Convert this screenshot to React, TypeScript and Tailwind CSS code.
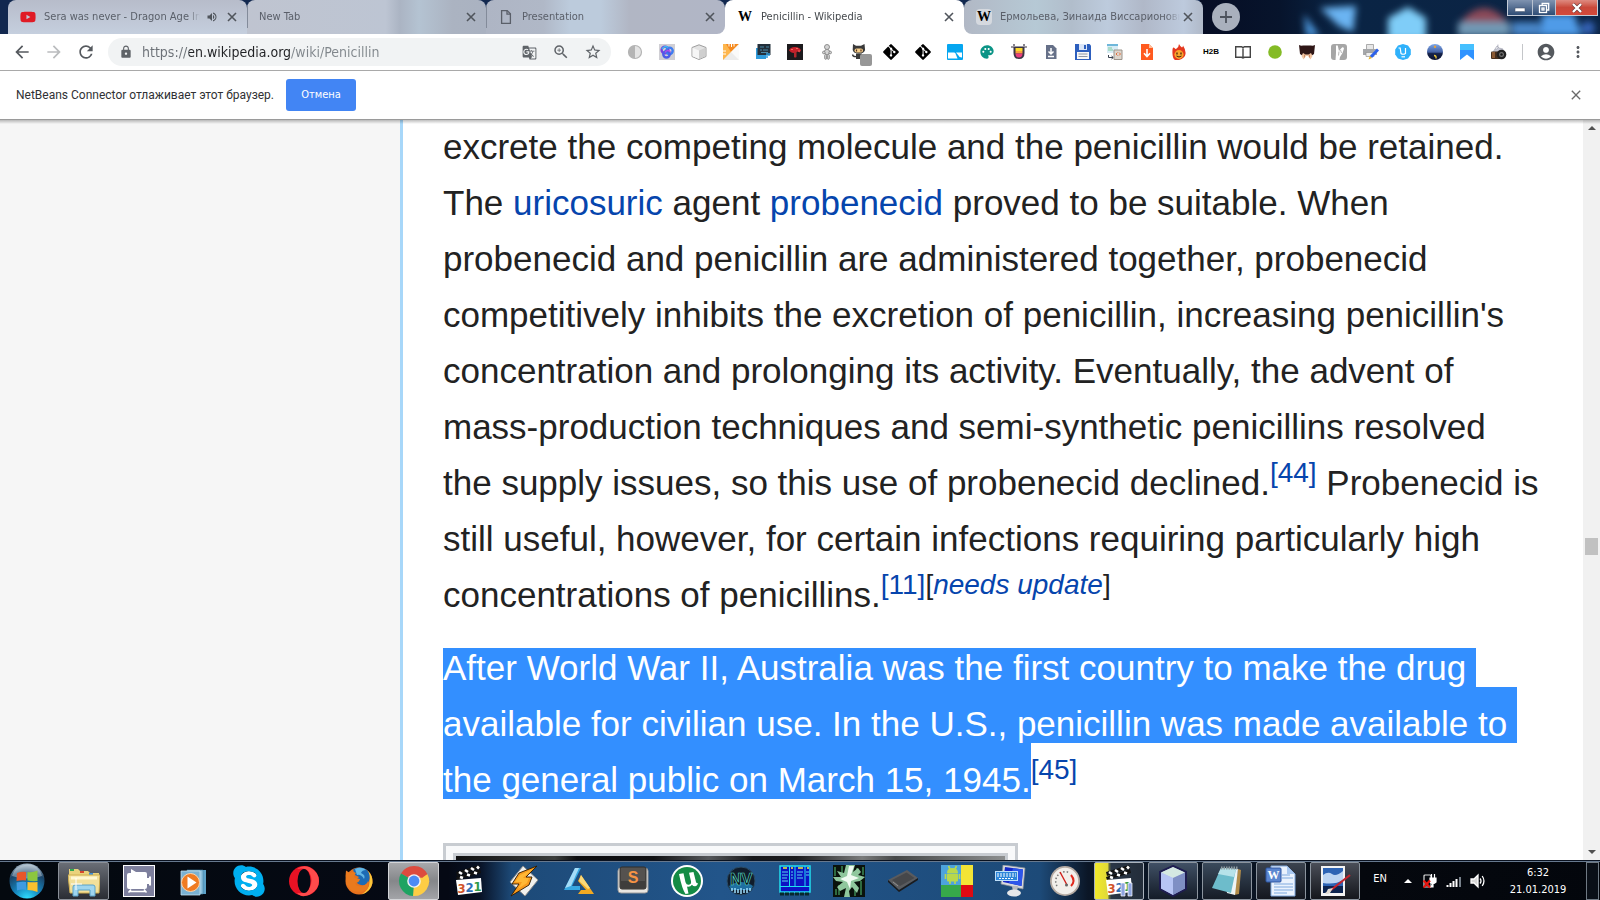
import type { ReactNode } from "react";
import { FaGitAlt, FaSkype, FaYoutube } from "react-icons/fa";
import {
  MdAccountCircle,
  MdArrowBack,
  MdArrowForward,
  MdClose,
  MdGTranslate,
  MdLock,
  MdMoreVert,
  MdPalette,
  MdRefresh,
  MdStarBorder,
  MdVolumeUp,
  MdZoomIn,
} from "react-icons/md";

const UI = "font-['DejaVu_Sans_Condensed','DejaVu_Sans',sans-serif]";

function I16({ children }: { children: ReactNode }) {
  return (
    <svg viewBox="0 0 16 16" className="size-4" aria-hidden="true">
      {children}
    </svg>
  );
}

function I32({ children }: { children: ReactNode }) {
  return (
    <svg viewBox="0 0 32 32" className="size-8" aria-hidden="true">
      {children}
    </svg>
  );
}

/* ---------- tab strip ---------- */

function WikiIcon({ boxed = false }: { boxed?: boolean }) {
  return (
    <span
      className={`flex size-4 shrink-0 items-center justify-center font-['Liberation_Serif',serif] text-[14px] leading-4 font-bold text-black ${boxed ? "rounded-sm bg-[#d5d9df]" : ""}`}
    >
      W
    </span>
  );
}

type TabInfo = {
  title: string;
  icon?: ReactNode;
  audio?: boolean;
  active?: boolean;
  wrap: string;
  look: string;
};

const tabs: TabInfo[] = [
  {
    title: "Sera was never - Dragon Age Inquisition",
    audio: true,
    icon: <FaYoutube className="size-4 shrink-0 text-[#e01b25]" />,
    wrap: "",
    look: "rounded-t-lg bg-linear-to-b from-[#b7bcca] to-[#c5cfde]",
  },
  {
    title: "New Tab",
    wrap: "",
    look: "rounded-t-lg bg-[linear-gradient(90deg,#bfc4d0_0%,#bdc5d3_58%,#abb4c3_64%,#b4c3d2_72%,#abb3c1_86%,#aab2c1_100%)]",
  },
  {
    title: "Presentation",
    icon: (
      <svg viewBox="0 0 16 16" className="size-4 shrink-0" fill="none" stroke="#5a5f69" strokeWidth="1.3" aria-hidden="true">
        <path d="M3.6 1.6h5.6l3.2 3.2v9.6H3.6z" />
        <path d="M9 1.8v3.3h3.3" />
      </svg>
    ),
    wrap: "bg-[linear-gradient(to_top,white_10px,#12284f_10px)]",
    look: "rounded-t-lg rounded-br-lg bg-[linear-gradient(90deg,#aeb5c4_0%,#b0b8c7_24%,#bccbdc_35%,#bccbdc_48%,#b1b6c4_60%,#b1b6c6_100%)]",
  },
  {
    title: "Penicillin - Wikipedia",
    icon: <WikiIcon />,
    active: true,
    wrap: "",
    look: "rounded-t-lg bg-white",
  },
  {
    title: "Ермольева, Зинаида Виссарионовна — Википедия",
    icon: <WikiIcon boxed />,
    wrap: "bg-[linear-gradient(90deg,white_10px,transparent_10px)] bg-[position:0_24px] bg-no-repeat",
    look: "rounded-t-lg rounded-bl-lg bg-[linear-gradient(90deg,#b1b8c5_0%,#b6c9d5_30%,#b1bdcb_45%,#bdcbdd_60%,#b0b8c8_75%,#bdcadd_92%,#b0b9c8_100%)]",
  },
];

function Tab({ tab, divider }: { tab: TabInfo; divider: boolean }) {
  return (
    <div className={`min-w-0 flex-1 basis-0 ${tab.wrap}`}>
      <div className={`relative flex h-[34px] items-center pr-[7px] pl-3 ${tab.look}`}>
        {divider && <span className="absolute top-[6px] left-0 h-[22px] w-px bg-[#838b9a]" />}
        <button
          role="tab"
          aria-selected={!!tab.active}
          className={`flex min-w-0 flex-1 items-center gap-2 text-left text-[11px] leading-4 ${tab.active ? "text-[#45494d]" : "text-[#5a5f69]"}`}
        >
          {tab.icon}
          <span className="min-w-0 flex-1 overflow-hidden whitespace-nowrap mask-r-from-92%">{tab.title}</span>
        </button>
        {tab.audio && <MdVolumeUp className="mx-[6px] size-3 shrink-0 text-[#50555c]" />}
        <button aria-label={`Close ${tab.title}`} className="flex size-4 shrink-0 items-center justify-center">
          <svg viewBox="0 0 10 10" className="size-[10px]" stroke="#50555c" strokeWidth="1.6" aria-hidden="true">
            <path d="M1 1l8 8M9 1l-8 8" />
          </svg>
        </button>
      </div>
    </div>
  );
}

function Wallpaper() {
  return (
    <svg viewBox="0 0 400 34" className="absolute top-0 right-0 h-full w-[400px]" aria-hidden="true">
      <defs>
        <filter id="soft" x="-20%" y="-40%" width="140%" height="180%">
          <feGaussianBlur stdDeviation="3.5" />
        </filter>
        <linearGradient id="night-sky">
          <stop offset="0" stopColor="#060d24" />
          <stop offset=".2" stopColor="#07142c" />
          <stop offset=".35" stopColor="#0a2444" />
          <stop offset="1" stopColor="#0b2445" />
        </linearGradient>
      </defs>
      <rect width="400" height="34" fill="url(#night-sky)" />
      <g filter="url(#soft)">
        <path d="M104 14l16 22h-14z" fill="#4b96dc" />
        <path d="M120 8l36-2-3 26-14-6z" fill="#6ab4f2" />
        <path d="M188 18l20-11 18 11v22h-38z" fill="#7fcdf8" />
        <path d="M262 20q22-24 44 0v6h-44z" fill="#8c4958" />
        <path d="M258 22h52v14h-52z" fill="#7199b5" />
        <path d="M312 22h28v14h-28z" fill="#4a86c8" />
        <path d="M342 14h32l8 22h-42z" fill="#4f9be8" />
        <circle cx="388" cy="28" r="7" fill="#3463b8" />
      </g>
    </svg>
  );
}

function WindowButtons() {
  return (
    <div className="relative mr-[2px] ml-auto flex h-4 shrink-0 self-start border border-t-0 border-[#c4ccd8]">
      <button aria-label="Minimize" className="flex w-[25px] items-center justify-center border-r border-[#b8c2d0] bg-linear-to-b from-[#7f93b0] to-[#2f4d75]">
        <svg viewBox="0 0 12 10" className="h-[10px] w-3" aria-hidden="true">
          <rect x="1" y="5" width="10" height="3.6" fill="#fff" stroke="#4a5870" strokeWidth=".6" />
        </svg>
      </button>
      <button aria-label="Restore" className="flex w-[23px] items-center justify-center border-r border-[#b8c2d0] bg-linear-to-b from-[#7f93b0] to-[#2f4d75]">
        <svg viewBox="0 0 12 12" className="size-3" fill="none" stroke="#fff" strokeWidth="1.3" aria-hidden="true">
          <path d="M4.2 3V1.5h6.500v6.500H9" />
          <rect x="1.5" y="3.5" width="7" height="7" />
          <rect x="4" y="6" width="2" height="2" />
        </svg>
      </button>
      <button aria-label="Close window" className="flex w-[41px] items-center justify-center bg-linear-to-b from-[#de8a80] via-[#c9483a] to-[#d4493a]">
        <svg viewBox="0 0 12 10" className="h-[10px] w-3" aria-hidden="true">
          <path d="M2 1l8 8M10 1L2 9" stroke="#6b3a3a" strokeWidth="3.6" />
          <path d="M2 1l8 8M10 1L2 9" stroke="#fff" strokeWidth="2.4" />
        </svg>
      </button>
    </div>
  );
}

/* ---------- toolbar extensions ---------- */

const extensions: { name: string; icon: ReactNode }[] = [
  {
    name: "Contrast",
    icon: (
      <I16>
        <circle cx="8" cy="8" r="6.5" fill="#e4e4e4" stroke="#b4b4b4" strokeWidth="1.2" />
        <path d="M8 1.5a6.5 6.5 0 0 0 0 13z" fill="#b4b4b4" />
      </I16>
    ),
  },
  {
    name: "Swirl",
    icon: (
      <I16>
        <rect width="16" height="16" fill="#d0cfd4" />
        <g fill="none" strokeWidth="2.4">
          <circle cx="6" cy="6" r="3.4" stroke="#7a3fe0" />
          <circle cx="10.5" cy="6.8" r="3.2" stroke="#3f7df0" />
          <circle cx="7.5" cy="10.3" r="3.2" stroke="#4a5ce8" />
          <path d="M3 5q2.500-4 6-1.500" stroke="#37c4ee" strokeWidth="1.5" />
          <path d="M6 8.500q2-3.500 5.500-.5" stroke="#b44be8" strokeWidth="1.5" />
        </g>
      </I16>
    ),
  },
  {
    name: "Cube",
    icon: (
      <I16>
        <path d="M8 .8l7 2.700v9L8 15.500l-7-3v-9z" fill="#e3e3e3" stroke="#9d9d9d" />
        <path d="M1.5 3.800L8 6.500v8.500l-6.500-2.800z" fill="#f6f6f6" />
        <path d="M8 6.500l6.500-2.700v8.400L8 15z" fill="#cfcfcf" />
      </I16>
    ),
  },
  {
    name: "Ruler",
    icon: (
      <I16>
        <rect width="16" height="16" fill="#ececec" />
        <path d="M0 0h16L0 16z" fill="#fdb64e" />
        <path d="M3 0h13L8 8z" fill="#f58a1f" />
        <path d="M6 0v2.500M8.500 0v3M11 0v2.500M0 7h3M0 10h3" stroke="#fff" />
        <path d="M16 0v16L8 8z" fill="#fafafa" />
      </I16>
    ),
  },
  {
    name: "Screens",
    icon: (
      <I16>
        <rect x="1" y="4" width="10" height="11" fill="#2f9bdb" />
        <rect x="2.500" y="0" width="13" height="11" fill="#23303b" />
        <path d="M5 3h4M11 3h3M5 6h2M8 6h5M6 8.500h7" stroke="#4a88a8" />
        <path d="M12 9v5M14 9v3" stroke="#2f9bdb" strokeWidth="1.5" />
      </I16>
    ),
  },
  {
    name: "Mushroom",
    icon: (
      <I16>
        <rect width="16" height="16" fill="#1c1a1d" />
        <path d="M2 6.500q1-3.500 6-3.500t6 3.500l-1.500 2-1.500-1-2.500 1q-4 1.500-6.500-2z" fill="#c8202b" />
        <path d="M7 7.500h2.500V13q-1.200 1-2.500 0z" fill="#b0262c" />
        <path d="M4 5.500h2M9 4.500h2M11 7h2" stroke="#ef6a5c" />
      </I16>
    ),
  },
  {
    name: "Figure",
    icon: (
      <I16>
        <g fill="#d4d4d4" stroke="#858585" strokeWidth=".9">
          <circle cx="8" cy="3" r="2.5" />
          <rect x="5.5" y="5.5" width="5" height="5" rx="2" />
          <circle cx="4.800" cy="8.500" r="1.3" />
          <circle cx="11.200" cy="8.500" r="1.3" />
          <rect x="5.700" y="10.300" width="2" height="5" rx="1" />
          <rect x="8.300" y="10.300" width="2" height="5" rx="1" />
        </g>
      </I16>
    ),
  },
  {
    name: "Octocat",
    icon: (
      <span className="relative block size-4">
        <svg viewBox="0 0 16 16" className="size-4" aria-hidden="true">
          <path d="M2 0l3 1.800h5L13.500 0l.6 6q-1 3.500-6.300 3.500T1.700 6z" fill="#3a3a3a" />
          <rect x="3.5" y="4.5" width="8.5" height="4" rx="2" fill="#f7cf8a" />
          <path d="M5.500 5.500v2M10 5.500v2" stroke="#503020" strokeWidth="1.2" />
          <path d="M5 9.500h6V15H5z" fill="#3a3a3a" />
          <path d="M5.500 12.500Q2 13 1.500 10.500" fill="none" stroke="#3a3a3a" strokeWidth="1.3" />
        </svg>
        <span className="absolute top-[10px] left-[9px] size-3 rounded-xs bg-[#979797]" />
      </span>
    ),
  },
  { name: "Git", icon: <FaGitAlt className="size-[18px] text-black" /> },
  { name: "Git history", icon: <FaGitAlt className="size-[18px] text-black" /> },
  {
    name: "Panels",
    icon: (
      <I16>
        <rect width="16" height="16" rx="1" fill="#05a6f0" />
        <path d="M1 8.500h6q1 0 1.500 1l2 5H1z" fill="#fff" />
        <path d="M9 8.500h6v5q-3 0-3.500-2z" fill="#fff" />
      </I16>
    ),
  },
  { name: "Palette", icon: <MdPalette className="size-4 text-[#0b9486]" /> },
  {
    name: "Cup",
    icon: (
      <I16>
        <path d="M2.500 3h11v6q0 6-5.500 6T2.500 9z" fill="#3b3544" />
        <path d="M4.500 4h7v3h-7z" fill="#fbd92e" />
        <path d="M4.500 7h7v2.500h-7z" fill="#f9a03c" />
        <path d="M4.500 9.500h7q0 4-3.500 4t-3.500-4z" fill="#ea3d7b" />
        <path d="M0 3h16M3 0v2M13 0v2" stroke="#3b3544" strokeWidth="1.2" />
      </I16>
    ),
  },
  {
    name: "Save page",
    icon: (
      <I16>
        <path d="M3 1h7l3.500 3.500V15H3z" fill="#667088" />
        <path d="M8 4v6M5.500 7.500L8 10l2.500-2.500M5 12.500h6" fill="none" stroke="#fff" strokeWidth="1.5" />
      </I16>
    ),
  },
  {
    name: "Disk",
    icon: (
      <I16>
        <path d="M0 0h14.500L16 1.500V16H0z" fill="#2d5fbe" />
        <path d="M4 0h8v6H4z" fill="#dbe6f8" />
        <path d="M9 1h2v4H9z" fill="#2d5fbe" />
        <path d="M2 8h12v7H2z" fill="#f7f7f7" />
        <path d="M3.500 10h9M3.500 12.500h9" stroke="#8e96a4" />
      </I16>
    ),
  },
  {
    name: "Transfer",
    icon: (
      <I16>
        <rect width="11" height="9" fill="#d8ecf5" />
        <rect width="11" height="2" fill="#6fb7da" />
        <path d="M1 4h4M1 6h5" stroke="#7ecb9f" />
        <path d="M1.500 11v2.500H6M4.500 12l1.800 1.500L4.500 15" fill="none" stroke="#3a4250" />
        <path d="M7 6h8v9.500H7z" fill="#ddd6cd" stroke="#9b948c" />
        <path d="M9 10l1.500-1.500M9 10l1.500 1.500M13.500 10L12 8.500M13.500 10L12 11.500" stroke="#e06f3f" />
      </I16>
    ),
  },
  {
    name: "Download",
    icon: (
      <I16>
        <path d="M2 0h8l4 4v12H2z" fill="#ff5a1f" />
        <path d="M10 0l4 4h-4z" fill="#ffc09c" />
        <path d="M8 5v7M5 9.300L8 12.500l3-3.200" fill="none" stroke="#fff" strokeWidth="1.6" />
      </I16>
    ),
  },
  {
    name: "Flame",
    icon: (
      <I16>
        <path d="M8 0q1 2 3 3.500 1-.5 1-2Q15 6 14.500 10T8 16 1.500 10 3.500 4q.5 1 1.500 1Q8 3 8 0z" fill="#e5391f" />
        <ellipse cx="8" cy="10.500" rx="4.6" ry="4.4" fill="#f9a52c" />
        <path d="M6 8.500v2M10 8.500v2" stroke="#47230d" strokeWidth="1.3" />
        <path d="M5.500 12q2.500 2 5 0" fill="none" stroke="#47230d" />
      </I16>
    ),
  },
  {
    name: "H2B",
    icon: <span className="font-['Liberation_Sans',sans-serif] text-[8px] leading-4 font-bold text-black">H2B</span>,
  },
  {
    name: "Reader",
    icon: (
      <I16>
        <path d="M.7 2.700h5.800L8 3.700l1.500-1h5.800v10.600H9.500L8 14l-1.500-.7H.7zM8 3.700V14" fill="#fff" stroke="#444" strokeWidth="1.4" />
      </I16>
    ),
  },
  {
    name: "Status",
    icon: (
      <I16>
        <circle cx="8" cy="8" r="6.8" fill="#84bb25" />
      </I16>
    ),
  },
  {
    name: "Face",
    icon: (
      <I16>
        <path d="M0 1q2 1 4 .5h8q2 .5 4-.5l-1 9-3 2H4l-3-2z" fill="#2f1616" />
        <path d="M4 9l-1.500 3 2 3.500L7 12l2 0 2.500 3.500 2-3.500L12 9l-2.500 1.500h-3z" fill="#f2c6a4" />
        <path d="M5.500 10.500v3M10.500 10.500v3" stroke="#b9704c" strokeWidth=".7" />
      </I16>
    ),
  },
  {
    name: "Gesture",
    icon: (
      <I16>
        <rect width="16" height="16" rx="3" fill="#a6a6a6" />
        <path d="M4.500 16L5 9 5 1.500h1.700L8 7l2.500-3 1.500-1 1 1.500L11.500 9 9 13l-.5 3z" fill="#fff" />
        <path d="M8 7.500l-.5 4M9.500 6l1 3" stroke="#a6a6a6" strokeWidth=".8" />
      </I16>
    ),
  },
  {
    name: "Print edit",
    icon: (
      <I16>
        <path d="M3.500 .5h7v5h-7z" fill="#e7e7e7" stroke="#999" strokeWidth=".8" />
        <path d="M0 5h14v6H0z" fill="#a5a7aa" />
        <path d="M3 8.500h8v4H3z" fill="#ededed" stroke="#888" strokeWidth=".6" />
        <path d="M14 4.500l2 2L9 14l-2.200-2z" fill="#2d62ea" />
        <path d="M6.800 12L9 14l-3.500 1.500z" fill="#e9b42b" />
      </I16>
    ),
  },
  {
    name: "Shop",
    icon: (
      <I16>
        <path d="M8 0l5 1.600 2.800 4v5L13 14.500 8 16l-5-1.500L.2 10.500v-5L3 1.600z" fill="#2fb1fb" />
        <path d="M3.500 4h1.700l.8 5.500q2 1.500 4.500 0V4" fill="none" stroke="#fff" strokeWidth="1.2" />
        <path d="M6.500 12.800h3.500" stroke="#fff" strokeWidth="1.2" />
      </I16>
    ),
  },
  {
    name: "Night",
    icon: (
      <I16>
        <defs>
          <linearGradient id="night" x1="0" y1="0" x2="0" y2="1">
            <stop offset="0" stopColor="#7da8ea" />
            <stop offset=".5" stopColor="#4562a4" />
            <stop offset=".6" stopColor="#15224a" />
            <stop offset="1" stopColor="#0c1330" />
          </linearGradient>
        </defs>
        <circle cx="8" cy="8" r="8" fill="url(#night)" />
        <circle cx="8" cy="2.700" r="1.2" fill="#e8a13a" />
        <path d="M7 11.500q2.500 0 2 3" fill="none" stroke="#e8c43a" strokeWidth="1.4" />
      </I16>
    ),
  },
  {
    name: "Bookmark",
    icon: (
      <I16>
        <path d="M1 0h14v16l-7-5.500L1 16z" fill="#2f93ff" />
        <path d="M1 0h14v6H1z" fill="#45c0ff" />
      </I16>
    ),
  },
  {
    name: "Camera",
    icon: (
      <I16>
        <path d="M4 6l3-2 0-3.500M6 2l2 2 4 1v3H2z" fill="#c8cad6" stroke="#9a9cab" strokeWidth=".6" />
        <rect x="0" y="7.500" width="10" height="7.500" rx="1" fill="#47301f" />
        <path d="M1 8h3v6H1z" fill="#8a5a34" />
        <circle cx="10.500" cy="10.500" r="4.8" fill="#222" />
        <circle cx="10.500" cy="10.500" r="2.500" fill="#707070" />
        <circle cx="10.500" cy="10.500" r="1.2" fill="#1a1a1a" />
      </I16>
    ),
  },
];

function IconButton({ label, children }: { label: string; children: ReactNode }) {
  return (
    <button aria-label={label} className="flex size-8 shrink-0 items-center justify-center">
      {children}
    </button>
  );
}

function Toolbar() {
  return (
    <div className="flex h-[37px] items-center border-b border-[#a9a9a9] bg-white pr-[6px] pl-[6px]">
      <IconButton label="Back"><MdArrowBack className="size-5 text-[#55595e]" /></IconButton>
      <IconButton label="Forward"><MdArrowForward className="size-5 text-[#babcbe]" /></IconButton>
      <IconButton label="Reload"><MdRefresh className="size-5 text-[#55595e]" /></IconButton>
      <div className="ml-[6px] flex h-7 min-w-0 flex-1 items-center rounded-full bg-[#f1f3f4] pr-[2px] pl-[11px]">
        <MdLock className="size-[14px] shrink-0 text-[#5f6368]" />
        <input
          aria-label="Address"
          defaultValue="https://en.wikipedia.org/wiki/Penicillin"
          className="ml-[9px] min-w-0 flex-1 bg-[linear-gradient(90deg,#6b7076_47px,#202124_47px,#202124_148px,#80868b_148px)] bg-clip-text text-[14px] leading-5 text-transparent outline-none"
        />
        <IconButton label="Translate"><MdGTranslate className="size-[15px] text-[#5f6368]" /></IconButton>
        <IconButton label="Zoom"><MdZoomIn className="size-[18px] text-[#5f6368]" /></IconButton>
        <IconButton label="Bookmark this page"><MdStarBorder className="size-[18px] text-[#5f6368]" /></IconButton>
      </div>
      <div className="ml-2 flex shrink-0">
        {extensions.map((e) => (
          <IconButton key={e.name} label={e.name}>{e.icon}</IconButton>
        ))}
      </div>
      <span className="mx-[7px] h-4 w-px shrink-0 bg-[#c4c6c9]" />
      <IconButton label="Profile"><MdAccountCircle className="size-5 text-[#55595e]" /></IconButton>
      <IconButton label="Menu"><MdMoreVert className="size-[18px] text-[#55595e]" /></IconButton>
    </div>
  );
}

function InfoBar() {
  return (
    <div className="flex h-12 shrink-0 items-center bg-white pr-4 pl-4">
      <p className="min-w-[255px] font-['Roboto','Liberation_Sans',sans-serif] text-[12px] leading-4 text-[#303134]">
        NetBeans Connector отлаживает этот браузер.
      </p>
      <button className="ml-3 h-8 w-[70px] rounded-[3px] bg-[#4285f4] text-[11px] text-white">Отмена</button>
      <button aria-label="Dismiss" className="ml-auto flex size-4 items-center justify-center">
        <MdClose className="size-4 text-[#6a6a6a]" />
      </button>
    </div>
  );
}

/* ---------- page ---------- */

function Sup({ children }: { children: ReactNode }) {
  return <sup className="top-0 align-super text-[28px] leading-none">{children}</sup>;
}

function A({ children }: { children: ReactNode }) {
  return <a href="#" className="text-[#0645ad]">{children}</a>;
}

function Article() {
  return (
    <main className="min-w-0 flex-1 overflow-hidden border-l-3 border-[#a7d7f9] bg-white px-10 font-['Liberation_Sans',sans-serif] text-[35px] leading-[56px] text-[#222]">
      <p className="mb-[17px]">
        excrete the competing molecule and the penicillin would be retained. The <A>uricosuric</A> agent{" "}
        <A>probenecid</A> proved to be suitable. When probenecid and penicillin are administered together,
        probenecid competitively inhibits the excretion of penicillin, increasing penicillin's concentration
        and prolonging its activity. Eventually, the advent of mass-production techniques and semi-synthetic
        penicillins resolved <br />
        the supply issues, so this use of probenecid declined.
        <Sup><A>[44]</A></Sup> Probenecid is still useful, however, for certain infections requiring
        particularly high concentrations of penicillins.
        <Sup><A>[11]</A></Sup>
        <Sup>[<i><A>needs update</A></i>]</Sup>
      </p>
      <p className="mb-[35px] text-white">
        <span className="bg-[#338fff] pr-[10px]">After World War II, Australia was the first country to make the drug</span>
        <br />
        <span className="bg-[#338fff] pt-[17px] pr-[10px]">available for civilian use. In the U.S., penicillin was made available to</span>
        <br />
        <span className="bg-[#338fff] pt-[17px]">the general public on March 15, 1945.</span>
        <Sup><A>[45]</A></Sup>
      </p>
      <figure className="h-40 w-[575px] border-3 border-[#c8ccd1] bg-[#f8f9fa] p-[7px]">
        <div className="h-full border-3 border-[#c8ccd1] bg-[linear-gradient(90deg,#101010_0%,#3c3e3c_18%,#0c0c0e_22%,#101012_36%,#55575a_46%,#18181a_54%,#1c1c1e_62%,#7a7b7b_74%,#464848_80%,#8c8e8e_100%)]" />
      </figure>
    </main>
  );
}

function Arrow({ down = false }: { down?: boolean }) {
  return (
    <button aria-label={down ? "Scroll down" : "Scroll up"} className="flex h-[17px] w-full items-center justify-center">
      <svg viewBox="0 0 8 4" className="h-1 w-2" aria-hidden="true">
        <path d={down ? "M0 0h8L4 4z" : "M0 4h8L4 0z"} fill="#505050" />
      </svg>
    </button>
  );
}

function ScrollBar() {
  return (
    <div className="flex w-[17px] shrink-0 flex-col bg-[#f1f1f1]">
      <Arrow />
      <div className="flex-[402]" />
      <div className="mx-[2px] h-[17px] bg-[#c1c1c1]" />
      <div className="flex-[288]" />
      <Arrow down />
    </div>
  );
}

/* ---------- taskbar ---------- */

function Clapper() {
  return (
    <>
      <path d="M3 12l24-8 1 4L4 15z" fill="#111" />
      <path d="M3 7L26 0l1 3L4 11z" fill="#111" />
      <path d="M6 7l3 2M12 5l3 2M18 3l3 2M24 1.500l2 2M7 12l3 1M14 9.500l3 1M21 7.500l3 1" stroke="#fff" strokeWidth="2.6" />
      <path d="M3 15l25-2 1 14-24 3z" fill="#fff" />
      <text x="4.500" y="28" fontSize="13" fontWeight="bold" fontFamily="DejaVu Sans Condensed" fill="#d0532c">3</text>
      <text x="12.500" y="27" fontSize="13" fontWeight="bold" fontFamily="DejaVu Sans Condensed" fill="#2e6fb8">2</text>
      <text x="20.500" y="26" fontSize="13" fontWeight="bold" fontFamily="DejaVu Sans Condensed" fill="#2f9a47">1</text>
    </>
  );
}

const wide: { name: string; frame?: string; icon: ReactNode }[] = [
  {
    name: "Explorer",
    frame: "border-[#8b9098] bg-linear-to-b from-[#6a6e76] to-[#2a2d34]",
    icon: (
      <I32>
        <path d="M1 4h9l2 2h8l2 2h9v5H1z" fill="#e9d27c" />
        <path d="M2 5h4" stroke="#2fa84f" strokeWidth="2" />
        <path d="M12 7h4" stroke="#d8462e" strokeWidth="2" />
        <path d="M21 9h4" stroke="#3a8fe0" strokeWidth="2" />
        <path d="M0 10h32l-1 18H2z" fill="#f3e09a" stroke="#cfae50" />
        <path d="M3 13h26" stroke="#fff7d2" strokeWidth="3" />
        <path d="M5 31V22q0-2 2-2h18q2 0 2 2v9h-5v-6H10v6z" fill="#9fd5ee" stroke="#5ba2c8" />
        <path d="M8 13v12M3 19h11" stroke="#fff" />
      </I32>
    ),
  },
  {
    name: "Recorder",
    icon: (
      <I32>
        <rect x=".5" y=".5" width="31" height="31" fill="#7d7f9d" stroke="#fff" />
        <path d="M8 4l5 3h9q2 0 2 2v4h2v-1.500h2v9h-2V19h-2v3q0 2-2 2H6q-2 0-2-2V10q0-2 2-2h2z" fill="#fff" />
        <path d="M6 26.500h17M8 24.500l-2.500 3M21 24.500l2.500 3" stroke="#fff" strokeWidth="1.5" />
      </I32>
    ),
  },
  {
    name: "Media Player",
    icon: (
      <I32>
        <path d="M12 5h16v24H12z" fill="#5ea2c8" />
        <path d="M9 5h16v24H9z" fill="#8dc0dc" stroke="#3f7fa5" strokeWidth=".6" />
        <path d="M3 6h19v24H3z" fill="#7ab1d2" stroke="#c4dfee" strokeWidth=".8" />
        <circle cx="12.500" cy="17.500" r="9" fill="#ef7b22" stroke="#ffd2a5" />
        <path d="M9.500 11.500l9 6-9 6z" fill="#fff" />
      </I32>
    ),
  },
  {
    name: "Skype",
    icon: (
      <span className="relative flex size-8 items-center justify-center">
        <span className="absolute size-5 rounded-full bg-white" />
        <FaSkype className="relative size-9 shrink-0 text-[#00aff0]" />
      </span>
    ),
  },
  {
    name: "Opera",
    icon: (
      <I32>
        <circle cx="16" cy="16" r="15" fill="#e81224" />
        <path d="M21 2q10 5 10 14T21 30q-8 3-12-2 10 1 13-6 3-7 0-13Q19 2 9 4q5-4 12-2z" fill="#ff4b4b" />
        <ellipse cx="16" cy="16" rx="6.5" ry="12" fill="#050a14" />
      </I32>
    ),
  },
  {
    name: "Firefox",
    icon: (
      <I32>
        <circle cx="16" cy="16" r="13.500" fill="#e8711c" />
        <path d="M24 5q6 5 5.500 13-2 9-11 11.500 8-5 8-12 1-7-2.500-12.500z" fill="#fbc63a" />
        <path d="M10 4.500Q17 .5 24 5q4 5 2 11-3 5-8 4-5-1-5-5l3-3-4-2z" fill="#1d6bb5" />
        <path d="M12 4q6-3 11 1-4 0-5 3 5 2 3 6-3-5-7-4z" fill="#63b7e6" />
        <path d="M3 5.500l4 2.500q3-2 6 0-3 3-1 5l5 1q-1 4-5 4 2 4 7 3 5-1 6-5 3 9-8 11-12 0-14-10Q2 11 3 5.500z" fill="#ea7a1e" />
      </I32>
    ),
  },
  {
    name: "Chrome",
    frame: "border-[#d4d5d8] bg-linear-to-b from-[#a7a8ab] via-[#85878a] to-[#a3a4a8]",
    icon: (
      <I32>
        <path d="M16 16L3 8.500A15 15 0 0 1 29.300 9z" fill="#dd4b3e" />
        <path d="M16 16L29.300 9A15 15 0 0 1 15 31z" fill="#fdcd45" />
        <path d="M16 16L15 31A15 15 0 0 1 3 8.500z" fill="#1ea362" />
        <path d="M16 9h13.300L24 13z" fill="#dd4b3e" />
        <circle cx="16" cy="16" r="6.8" fill="#f3f3f3" />
        <circle cx="16" cy="16" r="5.4" fill="#4c8bf5" />
      </I32>
    ),
  },
  { name: "Media Player Classic", icon: <I32><Clapper /></I32> },
  {
    name: "Winamp",
    icon: (
      <I32>
        <path d="M15 1l15 14-13 16L2 17z" fill="#f1f1ee" stroke="#8d8d8d" />
        <path d="M29 1L11 8 4 19l7 0-8 12 18-11 3-8-6 0z" fill="#f99a1c" stroke="#2b1800" strokeWidth=".9" />
        <path d="M25 4L12 10 7 17l7 0-4 7 9-6 2-5-6 0z" fill="#ffb835" />
      </I32>
    ),
  },
  {
    name: "AIMP",
    icon: (
      <I32>
        <path d="M12 3h6L9 21h8v4H1z" fill="#37a8e2" />
        <path d="M12 3l4 0-8 18-6 2z" fill="#a5dcf7" />
        <path d="M18 10l13 19H15l3-4h5l-8-9z" fill="#f2a922" />
        <path d="M18 10l9 13-2 1-9-8z" fill="#fbd878" />
      </I32>
    ),
  },
];

const narrow: { name: string; frame?: string; icon: ReactNode }[] = [
  {
    name: "Sublime Text",
    icon: (
      <I32>
        <rect x="1" y="3" width="30" height="25" rx="3" fill="#e9e6e1" stroke="#9a9a9a" />
        <rect x="3" y="2" width="26" height="22" rx="2" fill="#55524f" stroke="#2e2c2a" />
        <path d="M4 16h24v7H4z" fill="#3f3d3b" />
        <text x="16" y="18" fontSize="16" fontWeight="bold" textAnchor="middle" fontFamily="Liberation Sans" fill="#f79344">S</text>
      </I32>
    ),
  },
  {
    name: "uTorrent",
    icon: (
      <I32>
        <circle cx="16" cy="16" r="16" fill="#fff" />
        <circle cx="16" cy="16" r="14" fill="#148b45" />
        <path d="M8 9l4.500-.8 2 9q1 3 3.500 2.500t2-3.500l-2-8.500 4.500-.8 2.500 10q.5 1.500 2 1.200-.5 3-3 3.200-2 0-3-1.500-2 2.500-5 1.700l1.500 7-3 .5Q11 24 8 9z" fill="#fff" />
      </I32>
    ),
  },
  {
    name: "NV",
    icon: (
      <I32>
        <circle cx="16" cy="16" r="14" fill="#101c2b" stroke="#2b4d68" />
        <path d="M4 21q12-8 24 0l-2 4H6z" fill="#1f6fa0" />
        <path d="M7 26v-3M10 28v-5M13 28v-4M16 29v-6M19 28v-4M22 28v-5M25 26v-3" stroke="#9fe0ff" strokeWidth="1.5" />
        <text x="16" y="20" fontSize="16" fontWeight="bold" textAnchor="middle" fontFamily="Liberation Sans" fill="#0a0e12" stroke="#56cfc0" strokeWidth=".7">NV</text>
      </I32>
    ),
  },
  {
    name: "Far Manager",
    icon: (
      <I32>
        <rect x="1" y="1" width="30" height="26" fill="#0c12c4" stroke="#20e0f0" strokeWidth="1.5" />
        <path d="M16 1v20M10.500 1v20M26 1v20M1 21.500h30" stroke="#20e0f0" />
        <path d="M4 3h4M12 3h2M19 3h5M28 3h2" stroke="#f4ee30" strokeWidth="1.5" />
        <path d="M3 7h6M3 10h6M3 13h5M3 16h6M12 7h2M12 10h2M12 13h2M18 7h6M18 10h5M18 13h6M27 7h3M27 10h3" stroke="#58d8f0" />
        <path d="M1 29h30" stroke="#06282c" strokeWidth="3" strokeDasharray="4 1" />
      </I32>
    ),
  },
  {
    name: "Matrix",
    icon: (
      <I32>
        <rect width="32" height="32" fill="#0a120c" />
        <path d="M2 2v9M6 20v10M28 16v14M24 3v5M9 1v7M3 24v6M22 24v7M30 2v8" stroke="#2f6a40" strokeWidth="2" />
        <path d="M13 0h9l-2 7 5-4 3 4-3 3 7 2-5 4-6 1 5 6-2 5-5-6-3 4 1 6h-6l2-9-6 3-3-4 6-5-7-1-3-4 8 0-4-6 7 2z" fill="#8fc79d" />
        <path d="M16 1h5l-3 9 8 3-8 3-1 8-3-7-7-3 7-3z" fill="#f0fbf2" />
      </I32>
    ),
  },
  {
    name: "Tablet",
    icon: (
      <I32>
        <path d="M1 15L20 5l11 8-19 12z" fill="#5a5b5e" />
        <path d="M5 15L19.500 7.500l8 5.500L13 21z" fill="#46474a" />
        <path d="M1 15l11 10 19-12v2L12 27 1 17z" fill="#1b1b1c" />
        <path d="M6 17l5 4" stroke="#909090" />
      </I32>
    ),
  },
  {
    name: "Android emulator",
    icon: (
      <I32>
        <rect width="20" height="20" fill="#4da3dc" />
        <rect x="20" width="12" height="20" fill="#f3e436" />
        <rect y="20" width="20" height="12" fill="#37a84a" />
        <rect x="20" y="20" width="12" height="12" fill="#df0a12" />
        <g fill="#b9d84b">
          <path d="M6 8q0-5 5.500-5T17 8z" />
          <rect x="6" y="8.500" width="11" height="8" rx="1" />
          <path d="M4.500 9v5M18.500 9v5M9 16v3M14 16v3M7.500 1l1.500 3M15.500 1L14 4" stroke="#b9d84b" strokeWidth="1.7" />
        </g>
      </I32>
    ),
  },
  {
    name: "On-screen keyboard",
    icon: (
      <I32>
        <path d="M8 0l22 3-2 21-22-5z" fill="#d8dade" stroke="#8a8e96" strokeWidth=".7" />
        <path d="M10 2l18 2.500L26.500 21 8 17z" fill="#1629c8" />
        <path d="M18 3.200l10 1.300L26.500 21 14 18z" fill="#2d56ea" />
        <path d="M17 21h6l-1 6h-4z" fill="#b8babf" />
        <ellipse cx="19" cy="28" rx="7" ry="3.5" fill="#e6e7e9" />
        <rect x=".5" y="6.500" width="22" height="9" fill="#2d86d9" stroke="#bfe0fa" />
        <path d="M2 9h19M2 11h19M4 13.500h14" stroke="#fff" strokeDasharray="2 1" />
      </I32>
    ),
  },
  {
    name: "Gauge",
    icon: (
      <I32>
        <circle cx="16" cy="16" r="15" fill="#b5aaa2" />
        <circle cx="16" cy="16" r="13.2" fill="#f2efeb" />
        <path d="M8 21A9.500 9.500 0 0 1 20 7.500" fill="none" stroke="#777" strokeWidth="1.5" strokeDasharray="1.5 2" />
        <path d="M22 10q5 6 0 11" fill="none" stroke="#e02a1e" strokeWidth="2" />
        <path d="M11 7l7 13" stroke="#d21f1a" strokeWidth="1.4" />
        <circle cx="17.500" cy="20" r="1.5" fill="#666" />
      </I32>
    ),
  },
  {
    name: "Media playing",
    frame: "border-[#aab2bc] bg-[linear-gradient(90deg,#f3ea2a_0%,#e0da38_26%,#5c6440_30%,#2a3646_34%,#232d3a_100%)]",
    icon: (
      <I32>
        <Clapper />
        <path d="M18 18h4v13h-4zM25 18h4v13h-4z" fill="#8fa5e0" stroke="#fff" strokeWidth=".7" />
      </I32>
    ),
  },
  {
    name: "VirtualBox",
    frame: "border-[#8b949e] bg-linear-to-b from-[#405065] to-[#141c28]",
    icon: (
      <I32>
        <path d="M16 1l13 6v17l-13 7-13-7V7z" fill="#b9c4e6" stroke="#1e1c50" strokeWidth="2" />
        <path d="M16 2l12 5.500L16 13 4 7.500z" fill="#d5e8e2" />
        <path d="M4 7.500L16 13v17L4 23.500z" fill="#b6c4f4" />
        <path d="M28 7.500L16 13v17l12-6.500z" fill="#7f8fc4" />
      </I32>
    ),
  },
  {
    name: "Notepad",
    frame: "border-[#8b949e] bg-linear-to-b from-[#3a4a5c] to-[#161c26]",
    icon: (
      <I32>
        <path d="M27 4l3 1-2 24-5 1z" fill="#b08b49" />
        <path d="M11 3l16 1-3 26-8-2z" fill="#eef4f5" />
        <path d="M10 3l15 1-5 24L1 23z" fill="#6dbccb" />
        <path d="M10 3l15 1-2 8L7 9z" fill="#b7e2e9" />
        <path d="M10 3h17" stroke="#8d9aa0" strokeWidth="3" strokeDasharray="1.5 1" />
      </I32>
    ),
  },
  {
    name: "Word",
    frame: "border-[#8b949e] bg-linear-to-b from-[#3b434f] to-[#14171f]",
    icon: (
      <I32>
        <path d="M6 1h16l8 8v22H6z" fill="#eaf2fd" stroke="#7fa7dc" />
        <path d="M22 1v8h8z" fill="#a9c8f0" />
        <path d="M17 10h8M17 13h11M9 19h19M9 22h19M9 25h19M9 28h13" stroke="#7fa9de" />
        <rect x="1" y="3" width="15" height="14" rx="1" fill="#5c86cf" stroke="#2c56a4" />
        <text x="8.500" y="14" fontSize="12" fontWeight="bold" textAnchor="middle" fontFamily="Liberation Serif" fill="#fff">W</text>
      </I32>
    ),
  },
  {
    name: "Paint",
    frame: "border-[#8b949e] bg-linear-to-b from-[#4a4e58] to-[#15171d]",
    icon: (
      <I32>
        <rect x="2" y="1" width="24" height="30" fill="#f3f3f3" />
        <rect x="4" y="3" width="20" height="25" fill="#2d63b4" />
        <path d="M4 10q5-4 9-1t11-3v9q-8 5-20 3z" fill="#bcd4f2" />
        <path d="M4 21h20v7H4z" fill="#0d2450" />
        <path d="M31 10L12 25" stroke="#c3222c" strokeWidth="2.2" />
        <path d="M14 23l-3 5q-3 2-5 0 2-1 3-4z" fill="#e3ddd5" />
      </I32>
    ),
  },
];

function TaskButton({ name, frame, icon }: { name: string; frame?: string; icon: ReactNode }) {
  return (
    <button
      aria-label={name}
      className={`flex h-[38px] w-full items-center justify-center rounded-xs border ${frame ?? "border-transparent"}`}
    >
      {icon}
    </button>
  );
}

function Taskbar() {
  return (
    <footer className="flex h-10 shrink-0 items-center overflow-hidden border-t border-[#0a1220] bg-[linear-gradient(90deg,#04090f_0%,#050914_28%,#081226_30%,#1d4a78_32%,#22558a_45%,#1e4d7d_60%,#1d4a78_65%,#0b1626_68%,#0a1422_80%,#05080e_85%,#03060c_100%)] inset-shadow-[0_1px_0_#66788e]">
      <button aria-label="Start" className="ml-2 flex w-12 shrink-0 pl-px">
        <svg viewBox="0 0 36 36" className="size-9" aria-hidden="true">
          <defs>
            <radialGradient id="orb" cx=".5" cy="1" r="1">
              <stop offset="0" stopColor="#2fe0ff" />
              <stop offset=".4" stopColor="#1580b8" />
              <stop offset=".75" stopColor="#1b4468" />
              <stop offset="1" stopColor="#a9bccb" />
            </radialGradient>
          </defs>
          <circle cx="18" cy="18" r="17.500" fill="url(#orb)" />
          <path d="M3 13Q6 2 18 1.500T33 13q-15 5-30 0z" fill="#fff" opacity=".35" />
          <path d="M8 10q5-2 9-1v8.500q-5-.5-9.500.5z" fill="#e8562a" />
          <path d="M18.500 9q5 1 10-1.500V18q-5 .5-10-.5z" fill="#8cc63f" />
          <path d="M7.500 19.500q5-1 9.500-.5v8q-4-1-9 .5z" fill="#3f9be0" />
          <path d="M18.500 19q5 .5 10 0v10q-5-2-10-2z" fill="#fbc12d" />
        </svg>
      </button>
      {wide.map((t) => (
        <div key={t.name} className="w-[55px] shrink-0 px-[2px]"><TaskButton {...t} /></div>
      ))}
      {narrow.map((t) => (
        <div key={t.name} className="w-[54px] shrink-0 px-[2px]"><TaskButton {...t} /></div>
      ))}
      <div className="ml-auto flex h-full shrink-0 items-center text-[11px] leading-[17px] text-white">
        <button className="w-7 pb-1 text-center">EN</button>
        <button aria-label="Show hidden icons" className="ml-2 flex w-3 justify-center">
          <svg viewBox="0 0 8 4" className="h-1 w-2" aria-hidden="true"><path d="M0 4h8L4 0z" fill="#fff" /></svg>
        </button>
        <svg viewBox="0 0 16 16" className="ml-2 size-4" aria-hidden="true">
          <rect x="2" y="2" width="7" height="12" rx="1" fill="none" stroke="#ddd" strokeWidth="1.2" />
          <path d="M8 5h6v4q-3 3-6 0zM9.500 1v4M12.500 1v4M11 10v4H8" fill="#fff" stroke="#fff" strokeWidth="1.2" />
          <path d="M1.500 7.500l6.500 7M8 7.500l-6.500 7" stroke="#e8150f" strokeWidth="2.2" />
        </svg>
        <svg viewBox="0 0 16 16" className="ml-2 size-4" aria-hidden="true">
          <path d="M1.500 12v2M4.500 10v4M7.500 8v6M10.500 6v8" stroke="#fff" strokeWidth="2" />
          <path d="M14 4v10" stroke="#77808a" strokeWidth="2" />
        </svg>
        <svg viewBox="0 0 16 16" className="mr-1 ml-2 size-4" fill="none" stroke="#fff" strokeWidth="1.3" aria-hidden="true">
          <path d="M1 6h3l4-4v12l-4-4H1z" fill="#d8d8d8" />
          <path d="M10 5.500q2 2.500 0 5M12.200 3q3.500 5 0 10" />
        </svg>
        <div className="w-[96px] text-center">
          <div>6:32</div>
          <div>21.01.2019</div>
        </div>
        <button aria-label="Show desktop" className="mr-px h-[38px] w-[13px] border border-[#6f7983] bg-[#0a0f17]" />
      </div>
    </footer>
  );
}

export default function App() {
  return (
    <div className={`flex h-screen flex-col overflow-hidden bg-white ${UI}`}>
      <header className="shrink-0">
        <div className="relative flex h-[34px] items-end bg-[#12284f]">
          <Wallpaper />
          <div role="tablist" className="relative ml-2 flex min-w-0 flex-[0_1_1195px]">
            {tabs.map((t, i) => (
              <Tab key={t.title} tab={t} divider={i === 1 || i === 2} />
            ))}
          </div>
          <button aria-label="New tab" className="relative mb-[3px] ml-[9px] flex size-7 shrink-0 items-center justify-center rounded-full bg-[#a9b0bd]">
            <svg viewBox="0 0 12 12" className="size-3" stroke="#4c525c" strokeWidth="1.8" aria-hidden="true">
              <path d="M6 0v12M0 6h12" />
            </svg>
          </button>
          <WindowButtons />
        </div>
        <Toolbar />
      </header>
      <InfoBar />
      <div className="relative flex min-h-0 flex-1">
        <aside className="w-1/4 shrink-0 bg-[#f6f6f6]" />
        <Article />
        <ScrollBar />
        <div className="absolute inset-x-0 top-0 h-[5px] border-t border-[#9a9a9a] bg-linear-to-b from-black/25 to-transparent" />
      </div>
      <Taskbar />
    </div>
  );
}
